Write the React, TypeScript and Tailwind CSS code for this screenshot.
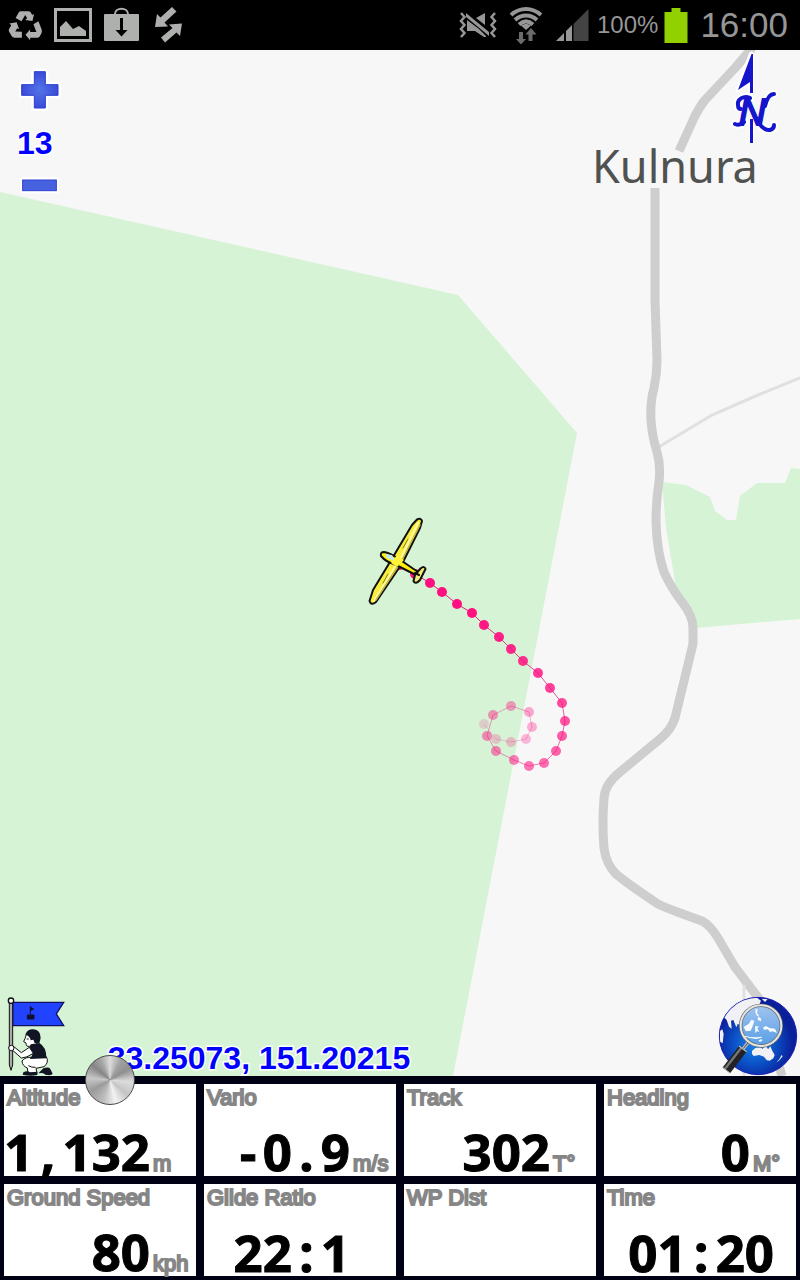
import React from 'react';

type Point = [number, number];

const track: Point[] = [
  [484, 724], [496, 739], [511, 742], [526, 739], [532, 727], [529, 712], [511, 706], [493, 715],
  [487, 736], [496, 751], [514, 760], [529, 766], [544, 763], [556, 751], [562, 736], [565, 721],
  [562, 703], [550, 688], [538, 673], [523, 661], [511, 649], [499, 637], [484, 625], [472, 613],
  [457, 604], [442, 592], [430, 583], [415, 574], [400, 565],
];

const fade = (i: number) => Math.min(1, 0.17 + i * 0.036);

interface Reading {
  label: string;
  value: string;
  unit?: string;
  wide?: boolean;
}

const readings: Reading[] = [
  { label: 'Altitude', value: '1,132', unit: 'm' },
  { label: 'Vario', value: '-0.9', unit: 'm/s' },
  { label: 'Track', value: '302', unit: 'T°' },
  { label: 'Heading', value: '0', unit: 'M°' },
  { label: 'Ground Speed', value: '80', unit: 'kph' },
  { label: 'Glide Ratio', value: '22:1' },
  { label: 'WP Dist', value: '' },
  { label: 'Time', value: '01:20', wide: true },
];

function StatusBar() {
  return (
    <header className="flex h-[50px] items-center justify-between bg-black pr-3 pl-2 text-[#969696]">
      <div className="flex items-center gap-[11px] text-[#aeb0ae]">
        <svg className="h-[31px] w-[35px]" viewBox="24 28 106 92" aria-hidden>
          <path
            d="M47 51L57 34Q59 31 63 31H87Q92 31 94 36L97 42L103 39L98 60L76 57L82 52L76 42L65 61zM28 68L50 64L58 85L52 82L46 92L66 93V111H44Q38 111 35 106L27 92Q25 88 28 83L34 73zM101 70L116 61L126 86Q128 92 125 98L120 107Q117 111 112 111H91V119L77 102L91 86V94H110z"
            fill="currentColor"
          />
        </svg>
        <svg className="h-[34px] w-[38px]" viewBox="0 0 38 34" aria-hidden>
          <rect x="1.5" y="1.5" width="35" height="31" fill="none" stroke="currentColor" strokeWidth="3" />
          <path d="M6 28v-9l6-6 7 8 6-3 7 5v5z" fill="currentColor" />
        </svg>
        <svg className="h-[36px] w-[36px]" viewBox="0 0 36 36" aria-hidden>
          <path d="M12 8V7c0-7 13-7 13 0v1" fill="none" stroke="currentColor" strokeWidth="2" />
          <rect x="1" y="7" width="35" height="27" rx="1" fill="currentColor" />
          <path d="M17 11h3v12h4.500l-6 6.500-6-6.500H17z" fill="#000" />
        </svg>
        <svg className="ml-1 h-[38px] w-[28px]" viewBox="0 0 28 38" aria-hidden>
          <path d="M18 1L22.500 5.500L10.500 16.500L14 20.500L1 21L3 8L6.500 11.500z" fill="currentColor" />
          <path d="M28 17.500L26 30L22.500 26.500L11 36.500L7 31.500L18.500 22L15 18.500z" fill="currentColor" />
        </svg>
      </div>
      <div className="flex items-center gap-1">
        <svg className="mr-2 h-[26px] w-[38px]" viewBox="0 0 38 26" aria-hidden>
          <g fill="none" stroke="currentColor" strokeWidth="2.500">
            <path d="M2 1l3.500 4L2 9l3.500 4L2 17l3.500 4L2 25M36 1l-3.500 4L36 9l-3.500 4 3.500 4-3.500 4 3.500 4" />
          </g>
          <path d="M8 8l12 9 7 7v1h-2L16 19H8zM17 6l9-5v12zM7 1l23 19v4L7 5z" fill="currentColor" />
        </svg>
        <svg className="mr-2 h-[37px] w-[34px]" viewBox="0 0 34 37" aria-hidden>
          <g fill="none" stroke="currentColor" strokeWidth="4">
            <path d="M2 8c9-8 21-8 30 0" />
            <path d="M6 13c6.500-6 15.500-6 22 0" />
            <path d="M10 17.500c4.500-4 9.500-4 14 0" />
          </g>
          <path d="M12 18.500c3-2 7-2 10 0L17 23z" fill="currentColor" />
          <path d="M10 25h4v7h3l-5 5.500L7 32h3zM22 21l5.500 6.500h-4V34h-4v-6.500h-3z" fill="#6b6b6b" />
        </svg>
        <svg className="mr-1 h-[34px] w-[34px]" viewBox="0 0 34 34" aria-hidden>
          <path d="M18.500 16L33.500 1v32h-15z" fill="#434343" />
          <path d="M1 33l8-8v8zM11 23l6-6v16h-6z" fill="currentColor" />
        </svg>
        <span className="text-[24px] leading-[50px]">100%</span>
        <svg className="mr-1 ml-[2px] h-[35px] w-[24px]" viewBox="0 0 24 35" aria-hidden>
          <path d="M0.500 4h7V0h9v4h7v31H.5z" fill="#92d000" />
        </svg>
        <span className="pl-1 text-[35px] leading-[50px]">16:00</span>
      </div>
    </header>
  );
}

function MapCanvas() {
  return (
    <svg
      className="absolute inset-0 h-full w-full"
      viewBox="0 50 800 1026"
      preserveAspectRatio="xMidYMid slice"
      role="img"
      aria-label="Map"
    >
      <rect x="0" y="50" width="800" height="1026" fill="#f7f7f7" />
      <path d="M0 192L458 295L577 433L512 770L453 1076H0z" fill="#d6f3d6" />
      <path
        d="M662 482l24 3 24 12 5 14 12 9h9l4-24 17-13h28l6-15 9 1v150l-104 9-20-40-10-60z"
        fill="#d6f3d6"
      />
      <path d="M657 448L712 415L758 395L800 378" fill="none" stroke="#e2dfe0" strokeWidth="3" />
      <g fill="none" stroke="#cecece" strokeWidth="9" strokeLinejoin="round">
        <path d="M752 48L735 68L705 100Q700 106 694 118L679 151" />
        <path d="M655 188V300L657 360Q657 374 654 388Q650 402 651 420Q652 436 657 452Q661 466 659 482Q656 500 656 522Q657 552 664 572Q670 586 682 602Q693 616 693 628V644L675 718Q671 730 660 739L620 772Q605 784 604 798Q602 824 604 848Q606 864 616 874Q628 884 658 904Q664 907 680 913L702 921Q710 925 718 938L735 967L760 1000L782 1076" />
      </g>
      <path d="M744 985V1076" stroke="#e2e0e1" strokeWidth="3" />
      <text
        x="592"
        y="183"
        className="fill-[#505250] stroke-[#f7f7f7] font-['Noto_Sans'] text-[45px] [paint-order:stroke]"
        strokeWidth="7"
      >
        Kulnura
      </text>
      {track.slice(1).map((p, i) => (
        <path
          key={i}
          d={`M${track[i][0]} ${track[i][1]}L${p[0]} ${p[1]}`}
          stroke="#e0207c"
          strokeWidth="1"
          opacity={fade(i)}
        />
      ))}
      {track.map(([x, y], i) => (
        <circle key={i} cx={x} cy={y} r="5" fill="#ff1080" opacity={fade(i)} />
      ))}
      <g strokeLinecap="round" strokeLinejoin="round">
        <path
          d="M417 519.500Q421 517.500 422 521L420 528L403 562L376 602Q371 606 369.500 601L373 590L393 557L412 525z"
          fill="#f7ee3b"
          stroke="#111"
          strokeWidth="2"
        />
        <path d="M418 523L400 560M396 565L374 601" stroke="#fff9a8" strokeWidth="2" />
        <path d="M420 525L402 560L376 600" fill="none" stroke="#c2b540" strokeWidth="1.500" />
        <path d="M408 539l-5 9M388 574l-5 9" stroke="#8a7f1c" strokeWidth="1" />
        <path
          d="M384 552Q380 552 381 556Q386 562 394 564L416 575L418 572L399 559Q390 553 384 552z"
          fill="#ffef10"
          stroke="#111"
          strokeWidth="2"
        />
        <path d="M385 554l7 1 4 7-9-4z" fill="#c4e8ef" />
        <path d="M391 563l6-8 7 5-7 7z" fill="#fff23a" />
        <path
          d="M420.500 568.500Q424.500 565.500 425.500 569L420 580Q415.500 585 413.500 581L415 575z"
          fill="#f3ea75"
          stroke="#111"
          strokeWidth="2"
        />
        <path d="M415 573l4 2" stroke="#111" strokeWidth="2" />
      </g>
    </svg>
  );
}

function ZoomControls() {
  return (
    <div className="absolute top-0 left-0 flex flex-col items-start pt-5 pl-4">
      <button type="button" aria-label="Zoom in" className="ml-1">
        <svg className="block h-10 w-10 overflow-visible" viewBox="60 45 120 120">
          <defs>
            <radialGradient id="blue">
              <stop offset="0" stopColor="#5274e8" />
              <stop offset="1" stopColor="#3b4bd8" />
            </radialGradient>
          </defs>
          <path
            d="M102 49h35v39h38v34h-38v38h-35v-38H64V88h38z"
            fill="#fff"
            stroke="#fff"
            strokeWidth="16"
            strokeLinejoin="round"
          />
          <path d="M103 50h33v39h38v32h-38v38h-33v-38H65V89h38z" fill="url(#blue)" stroke="#2c3fd0" strokeWidth="3" />
        </svg>
      </button>
      <output className="mb-[2px] pl-px text-[32px] leading-[66px] font-bold text-[#0000ff] [paint-order:stroke] [-webkit-text-stroke:3px_white]">
        13
      </output>
      <button type="button" aria-label="Zoom out" className="ml-1">
        <svg className="block h-4 w-10 overflow-visible" viewBox="60 369 120 48">
          <rect x="61" y="367" width="116" height="48" rx="5" fill="#fff" />
          <rect x="68" y="375" width="101" height="32" fill="#4662df" stroke="#2c3fd0" strokeWidth="3" />
        </svg>
      </button>
    </div>
  );
}

const swashes = 'M750 98c-6-3-13 1-12 7q0 4 3 4M744 122q-4 4-9 2M765 106q3-12 9-12M758 122q6 9 12 8q4-1 4-5';

function NorthArrow() {
  return (
    <svg className="absolute top-0 right-5 h-24 w-14" viewBox="724 50 56 96" role="img" aria-label="North">
      <g stroke="#fff" strokeWidth="5" strokeLinejoin="round" fill="#fff">
        <path d="M751.500 54V92L749 81L738 90z" />
        <path d="M751.500 118V143" />
      </g>
      <path d="M751.500 54H753V93H750V82L738 90z" fill="#1515cc" />
      <path d={swashes} fill="none" stroke="#fff" strokeWidth="8" strokeLinecap="round" />
      <text
        x="739"
        y="125"
        fill="#1515cc"
        stroke="#1515cc"
        strokeWidth="2"
        className="font-['Liberation_Sans'] text-[37px] italic"
      >
        N
      </text>
      <path d={swashes} fill="none" stroke="#1515cc" strokeWidth="4" strokeLinecap="round" />
      <path d="M750 119h3v24h-3z" fill="#1515cc" />
    </svg>
  );
}

function FlagBearer() {
  return (
    <svg className="block h-20 w-[60px]" viewBox="18 33 180 240" aria-hidden>
      <path d="M38 52H191L169 87L191 122H38z" fill="#2142ff" stroke="#10105c" strokeWidth="4" />
      <path d="M91 65v24M82 90h20v12H82z" stroke="#101030" strokeWidth="3" fill="#101030" />
      <path d="M91 64l12 9-12 5z" fill="#101030" />
      <path d="M28 50h10v190l-5 16-5-16z" fill="#aaa" stroke="#111" strokeWidth="3" />
      <circle cx="33" cy="47" r="8" fill="#fff" stroke="#111" strokeWidth="4" />
      <path
        d="M79 148q-3 12-8 22l7 4q0 12 10 10l22-1V143z"
        fill="#fff"
        stroke="#111"
        strokeWidth="3"
      />
      <path d="M76 149q6-17 24-16 22 2 22 26l-4 16-14-1-4-10-8 2q-2-14-16-17z" fill="#111422" />
      <path d="M80 162h6" stroke="#111" strokeWidth="3" />
      <path
        d="M66 228q10-13 30-11l43-2q9 18-7 30l-24 5 3 15H84l-2-16q-15-6-16-21z"
        fill="#fff"
        stroke="#111"
        strokeWidth="3"
      />
      <path d="M85 242q10 6 22 5" fill="none" stroke="#111" strokeWidth="3" />
      <path d="M92 178l26-4q22 12 21 46l-50 2q10-10 8-20-10-4-10-10z" fill="#111422" />
      <path d="M88 187l-24 16-25-20q-10-2-12 5 1 10 12 9l25 22q16 0 36-14z" fill="#fff" stroke="#111" strokeWidth="3" />
      <circle cx="34" cy="189" r="8" fill="#fff" stroke="#111" strokeWidth="3" />
      <path d="M70 262q12-7 20 0l22-2v10q-22 5-44-1zM131 249q17-4 20 3l7 14q-3 7-22 3-5-8-21-4z" fill="#111422" />
    </svg>
  );
}

function GlobeSearch() {
  return (
    <svg className="block h-20 w-20" viewBox="55 33 240 240" aria-hidden>
      <defs>
        <radialGradient id="sea" cx="0.450" cy="0.600">
          <stop offset="0" stopColor="#1a86ea" />
          <stop offset="0.550" stopColor="#0b4fc4" />
          <stop offset="1" stopColor="#0a1f9a" />
        </radialGradient>
        <linearGradient id="lens" x2="0" y2="1">
          <stop offset="0" stopColor="#a9cdf5" />
          <stop offset="1" stopColor="#5b9fe4" />
        </linearGradient>
        <clipPath id="disc">
          <circle cx="175" cy="153" r="115" />
        </clipPath>
      </defs>
      <circle cx="175" cy="153" r="116" fill="url(#sea)" stroke="#1b1bb8" strokeWidth="3" />
      <g clipPath="url(#disc)" fill="#f1f1f5">
        <path d="M64 112Q88 45 170 37l14 10-6 14-30 12-14 22-8 26-12-4-4 10-9-22-7 2 2 24-8-6-7-20-8-8z" />
        <path d="M60 138l8-5 4 14-3 28-8-5zM186 41l18 2-8 8z" />
        <path d="M157 198l10-9 15-2 7 5 4-7h8l4 8 7-9 5 12 8 14-4 10-11 7-10-3-7-9-14-5-17 3-5-6zM201 220h7l-4 9zM246 210l3 4-10 12-9 7 9-11z" />
      </g>
      <path d="M149 168l-19 24" stroke="#bbb" strokeWidth="10" />
      <path d="M149 168l-19 24" stroke="#555" strokeWidth="3" />
      <circle cx="184" cy="122" r="61" fill="url(#lens)" fillOpacity="0.950" stroke="#66686c" strokeWidth="10" />
      <circle cx="184" cy="122" r="61" fill="none" stroke="#e5e6df" strokeWidth="6" />
      <g fill="#f8fbff">
        <path d="M168 70l6 4-2 11 6 6-5 3-6-11zM176 94l9 8-2 7-9-5zM132 126l15-9 8-13 9 3-4 14-7 16-14 2zM166 124h12l-5 6 6 12-7-4-5 7zM190 128l8-5 12 6 16 2 6 13-13-5-8 2-6-8-12 1zM134 152l18 4 18 1 16-2v3l-17 4-18-3-16-4zM176 167l9-5 4 4-8 5z" />
      </g>
      <path d="M130 191L80 256" stroke="#222" strokeWidth="28" />
      <path d="M125 188L75 253" stroke="#777" strokeWidth="7" />
      <path d="M69 247l22 17" stroke="#b5b5b5" strokeWidth="3" />
      <path d="M118 183l23 17" stroke="#bbb" strokeWidth="4" />
    </svg>
  );
}

/* Punctuation takes the same advance as a digit so that values stay in columns. */
function Digits({ text }: { text: string }) {
  return (
    <>
      {text.split(/([^0-9])/).map((part, i) =>
        /^[^0-9]$/.test(part) ? (
          <span key={i} className="inline-block w-[29px] text-center">
            {part}
          </span>
        ) : (
          part
        ),
      )}
    </>
  );
}

function Instruments() {
  return (
    <section className="relative bg-[#000015]">
      <dl className="grid grid-cols-4 gap-2 px-1 pt-2 pb-1">
        {readings.map((r) => (
          <div key={r.label} className="flex h-[92px] flex-col justify-between bg-white">
            <dt className="pl-[3px] text-[22px] leading-7 text-[#868686] [-webkit-text-stroke:2px_#868686]">{r.label}</dt>
            <dd className="flex items-baseline justify-end">
              <span className="font-['Noto_Sans'] text-[51px] leading-[48px] font-bold whitespace-nowrap text-black [-webkit-text-stroke:1px_black]">
                <Digits text={r.value} />
              </span>
              <span
                className={
                  r.wide
                    ? 'w-[22px] shrink-0'
                    : 'w-[46px] shrink-0 pl-[3px] text-[22px] leading-6 text-[#868686] [-webkit-text-stroke:2px_#868686]'
                }
              >
                {r.unit}
              </span>
            </dd>
          </div>
        ))}
      </dl>
      <button
        type="button"
        aria-label="Drag panel"
        className="absolute -top-[21px] left-[85px] h-[50px] w-[50px] rounded-full border border-[#4a4a4a] bg-[conic-gradient(#dcdcdc,#a0a0a0_30deg,#909090_60deg,#ddd_95deg,#c4c4c4_130deg,#f2f2f2_165deg,#bbb_200deg,#9a9a9a_240deg,#c8c8c8_275deg,#858585_310deg,#a5a5a5_335deg,#dcdcdc)]"
      />
    </section>
  );
}

export default function App() {
  return (
    <div className="flex min-h-screen flex-col font-['Liberation_Sans',Arial,sans-serif]">
      <StatusBar />
      <main className="relative flex-1 bg-[#f7f7f7]">
        <MapCanvas />
        <ZoomControls />
        <NorthArrow />
        <p className="absolute bottom-0 left-[97px] text-[32px] leading-9 font-bold whitespace-nowrap text-[#0000ff] [paint-order:stroke] [-webkit-text-stroke:3px_white]">
          -33.25073, 151.20215
        </p>
        <button type="button" aria-label="Waypoints" className="absolute bottom-0 left-[6px]">
          <FlagBearer />
        </button>
        <button type="button" aria-label="Search map" className="absolute right-[2px] bottom-0">
          <GlobeSearch />
        </button>
      </main>
      <Instruments />
    </div>
  );
}
